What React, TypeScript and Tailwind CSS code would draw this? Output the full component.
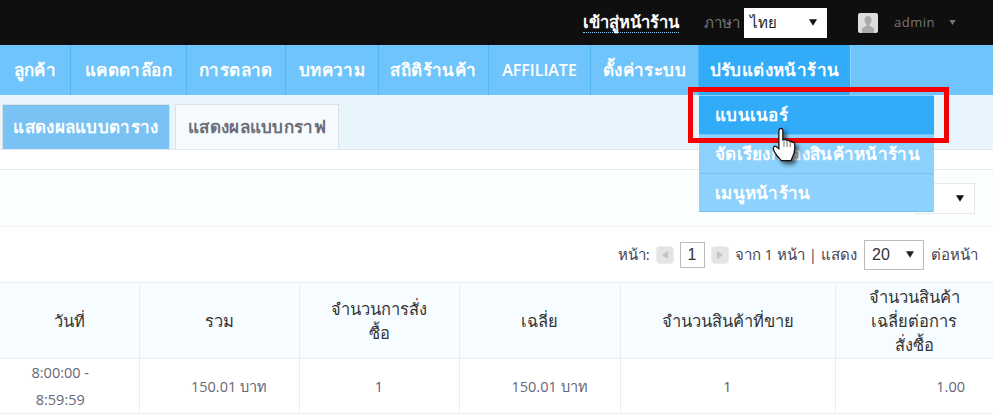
import React from 'react';

const navItems = [
  { label: 'ลูกค้า', width: 'w-[71px]' },
  { label: 'แคตตาล๊อก', width: 'w-[116px]' },
  { label: 'การตลาด', width: 'w-[99px]' },
  { label: 'บทความ', width: 'w-[93px]' },
  { label: 'สถิติร้านค้า', width: 'w-[110px]' },
  { label: 'AFFILIATE', width: 'w-[102px]' },
  { label: 'ตั้งค่าระบบ', width: 'w-[108px]' },
];

const Caret = ({ className }: { className: string }) => (
  <svg viewBox="0 0 10 8" className={className} aria-hidden="true">
    <path d="M0 0h10L5 8z" fill="currentColor" />
  </svg>
);

const PageButton = ({ dir }: { dir: 'prev' | 'next' }) => (
  <span className="flex h-[18px] w-[18px] items-center justify-center rounded-sm border border-[#eeeeee] bg-[#e4e4e4]">
    <svg viewBox="0 0 6 8" className="h-2 w-1.5 text-[#c4c4c4]" aria-hidden="true">
      <path d={dir === 'prev' ? 'M6 0v8L0 4z' : 'M0 0v8l6-4z'} fill="currentColor" />
    </svg>
  </span>
);

const HandCursor = () => (
  <svg viewBox="0 0 24 33" className="absolute left-[772px] top-[127px] h-[35px] w-[25px] drop-shadow-[3px_3px_2px_rgba(0,0,0,0.6)]" aria-hidden="true">
    <path
      d="M8.500 1c1.200 0 1.900 1 1.900 2.500V12l1.400-.4c1.200-.3 2 .2 2.300 1 1-.5 2.200-.2 2.600.8 1-.4 2.100 0 2.500 1 1-.3 2.500.3 2.600 1.500.3 3.500.2 6.500-.7 9-.8 2.500-1.800 4-2.800 7H9C6.500 29 3 26 1.500 21.500c-.7-2 .6-4 2.100-3.300l3 2.300V3.500C6.600 2 7.300 1 8.500 1z"
      fill="#ffffff"
      stroke="#111111"
      strokeWidth="1.200"
    />
    <path d="M11.500 12v7M14.500 13v6M17.500 14v5" stroke="#777777" strokeWidth="1" fill="none" />
  </svg>
);

export default function App() {
  return (
    <div className="relative h-[414px] w-[993px] overflow-hidden bg-white font-['Open_Sans','Noto_Sans',sans-serif] text-[15px] text-[#555566]">
      {/* Top bar */}
      <header className="flex h-[45px] items-center bg-[#0f0f0f] pl-[583px]">
        <a className="border-b border-dotted border-[#7fc8f8] text-[16.5px] leading-[20px] font-bold text-white">เข้าสู่หน้าร้าน</a>
        <span className="ml-[25px] text-[15px] text-[#777777]">ภาษา</span>
        <div className="ml-[4px] flex h-[30px] w-[83px] items-center justify-between bg-white pl-[6px] pr-[10px] text-[15px] text-[#222222]">
          <span>ไทย</span>
          <Caret className="h-[7px] w-[8px] text-[#111111]" />
        </div>
        <span className="ml-[31px] flex h-5 w-5 items-end justify-center overflow-hidden rounded-[2px] bg-[#dddddd]">
          <svg viewBox="0 0 20 20" className="h-5 w-5 text-[#aaaaaa]" aria-hidden="true">
            <path d="M10 3c2.300 0 3.500 1.800 3.500 4 0 2-1 3.500-2 4.300v1.200l4.500 3V20H4v-4.500l4.500-3v-1.200c-1-.8-2-2.300-2-4.300 0-2.200 1.200-4 3.500-4z" fill="currentColor" />
          </svg>
        </span>
        <span className="ml-[16px] text-[13px] tracking-[0.5px] text-[#777777]">admin</span>
        <Caret className="ml-[13px] h-[5px] w-[9px] text-[#777777]" />
      </header>

      {/* Main nav */}
      <nav className="flex h-[50px] bg-[#6fc5fb] text-[17px] font-semibold tracking-[0.4px] text-white">
        {navItems.map((item) => (
          <div
            key={item.label}
            className={`flex items-center justify-center border-r border-[#53b4f2] ${item.width} ${item.label === 'AFFILIATE' ? 'text-[16px] tracking-normal' : ''}`}
          >
            {item.label}
          </div>
        ))}
        <div className="flex w-[152px] items-center justify-center border-r border-[#8fd2fb] bg-[#32abf8]">ปรับแต่งหน้าร้าน</div>
      </nav>

      {/* Tabs */}
      <div className="flex h-[55px] items-end gap-[5px] border-b border-[#e3e6e8] bg-[#e8f5fd] pl-[2px] text-[17px] font-semibold tracking-[0.3px]">
        <div className="flex h-[45px] w-[168px] items-center justify-center border border-b-0 border-[#dde1e4] bg-[#79c3f4] text-white">แสดงผลแบบตาราง</div>
        <div className="flex h-[45px] w-[164px] items-center justify-center border border-b-0 border-[#dde1e4] bg-[#f5fbff] text-[#6d6d78]">แสดงผลแบบกราฟ</div>
      </div>

      {/* Filter */}
      <div className="h-[20px] border-b border-[#e8ecee] bg-white" />
      <div className="flex h-[57px] items-center justify-end border-b border-[#eef3f5] bg-[#fbfeff] pr-[18px]">
        <div className="flex h-[31px] w-[60px] items-center justify-end border border-[#e8e8e8] bg-white pr-[10px]">
          <Caret className="h-[7px] w-[8px] text-[#111111]" />
        </div>
      </div>

      {/* Pager */}
      <div className="flex h-[55px] items-center justify-end pr-[15px] text-[15px] text-[#444455]">
        <span>หน้า:</span>
        <span className="ml-[6px]"><PageButton dir="prev" /></span>
        <span className="ml-[6px] flex h-[26px] w-[25px] items-center border border-[#bbbbbb] pl-[7px] font-['Liberation_Sans',sans-serif] text-[16px] text-[#333333]">1</span>
        <span className="ml-[6px]"><PageButton dir="next" /></span>
        <span className="ml-[6px]">จาก 1 หน้า | แสดง</span>
        <div className="ml-[7px] flex h-[30px] w-[60px] items-center justify-between border border-[#bbbbbb] pl-[7px] pr-[9px] font-['Liberation_Sans',sans-serif] text-[16px] text-[#333333]">
          <span>20</span>
          <Caret className="h-[7px] w-[8px] text-[#222222]" />
        </div>
        <span className="ml-[7px]">ต่อหน้า</span>
      </div>

      {/* Report table */}
      <table className="w-[993px] table-fixed border-collapse text-center text-[14.5px]">
        <colgroup>
          <col className="w-[139px]" />
          <col className="w-[160px]" />
          <col className="w-[160px]" />
          <col className="w-[161px]" />
          <col className="w-[215px]" />
          <col className="w-[158px]" />
        </colgroup>
        <thead>
          <tr className="h-[76px] bg-[#f6fcff] text-[16.5px] leading-[24px] text-[#333333]">
            <th className="border border-l-0 border-[#eaeef0] px-[30px] font-medium">วันที่</th>
            <th className="border border-[#eaeef0] px-[30px] font-medium">รวม</th>
            <th className="border border-[#eaeef0] px-[30px] font-medium">จำนวนการสั่งซื้อ</th>
            <th className="border border-[#eaeef0] px-[30px] font-medium">เฉลี่ย</th>
            <th className="border border-[#eaeef0] px-[20px] font-medium">จำนวนสินค้าที่ขาย</th>
            <th className="border border-r-0 border-[#eaeef0] px-[30px] font-medium">จำนวนสินค้าเฉลี่ยต่อการสั่งซื้อ</th>
          </tr>
        </thead>
        <tbody>
          <tr className="h-[55px] leading-[27px] text-[#666677]">
            <td className="border border-l-0 border-[#eaeef0] pl-[28px] pr-[46px]">8:00:00 - 8:59:59</td>
            <td className="border border-[#eaeef0] pl-[20px]">150.01 บาท</td>
            <td className="border border-[#eaeef0] text-[#555588]">1</td>
            <td className="border border-[#eaeef0] pl-[20px]">150.01 บาท</td>
            <td className="border border-[#eaeef0] text-[#775544]">1</td>
            <td className="border border-r-0 border-[#eaeef0] pr-[28px] text-right">1.00</td>
          </tr>
        </tbody>
      </table>

      {/* Dropdown menu */}
      <div className="absolute left-[699px] top-[95px] w-[235px] bg-[#8dd1fd] text-[17px] font-semibold tracking-[0.3px] text-white">
        <div className="flex h-[39px] items-center border-t border-[#8dd1fd] bg-[#32abf8] pl-[16px]">แบนเนอร์</div>
        <div className="flex h-[39px] items-center border-t border-[#6fc5fb] pl-[16px]">จัดเรียงกล่องสินค้าหน้าร้าน</div>
        <div className="flex h-[39px] items-center border-y border-[#6fc5fb] pl-[16px]">เมนูหน้าร้าน</div>
      </div>

      {/* Screenshot annotation */}
      <div className="absolute left-[688px] top-[87px] h-[56px] w-[261px] border-[5px] border-[#f50000]" />
      <HandCursor />
    </div>
  );
}
